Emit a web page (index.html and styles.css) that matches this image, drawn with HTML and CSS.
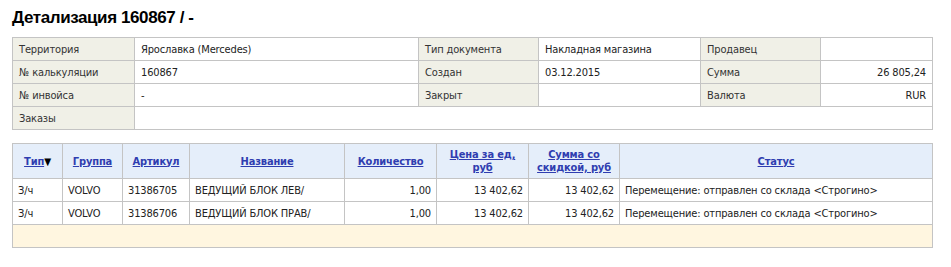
FILE: index.html
```html
<!DOCTYPE html>
<html lang="ru">
<head>
<meta charset="utf-8">
<link rel="stylesheet" href="styles.css">
</head>
<body>
<h1 class="title">Детализация 160867 / -</h1>
<table class="info">
  <colgroup>
    <col class="c1"><col class="c2"><col class="c3"><col class="c4"><col class="c5"><col class="c6">
  </colgroup>
  <tr>
    <td class="lbl">Территория</td><td>Ярославка (Mercedes)</td>
    <td class="lbl">Тип документа</td><td>Накладная магазина</td>
    <td class="lbl">Продавец</td><td></td>
  </tr>
  <tr>
    <td class="lbl">№ калькуляции</td><td>160867</td>
    <td class="lbl">Создан</td><td>03.12.2015</td>
    <td class="lbl">Сумма</td><td class="num">26 805,24</td>
  </tr>
  <tr>
    <td class="lbl">№ инвойса</td><td>-</td>
    <td class="lbl">Закрыт</td><td></td>
    <td class="lbl">Валюта</td><td class="num">RUR</td>
  </tr>
  <tr>
    <td class="lbl">Заказы</td><td colspan="5"></td>
  </tr>
</table>

<table class="grid">
  <colgroup>
    <col class="g1"><col class="g2"><col class="g3"><col class="g4"><col class="g5"><col class="g6"><col class="g7"><col class="g8">
  </colgroup>
  <thead>
    <tr>
      <th><a href="#">Тип</a><span class="arrow">▼</span></th>
      <th><a href="#">Группа</a></th>
      <th><a href="#">Артикул</a></th>
      <th><a href="#">Название</a></th>
      <th><a href="#">Количество</a></th>
      <th><a href="#">Цена за ед,<br>руб</a></th>
      <th><a href="#">Сумма со<br>скидкой, руб</a></th>
      <th><a href="#">Статус</a></th>
    </tr>
  </thead>
  <tbody>
    <tr>
      <td>З/ч</td><td>VOLVO</td><td>31386705</td><td>ВЕДУЩИЙ БЛОК ЛЕВ/</td>
      <td class="num">1,00</td><td class="num">13 402,62</td><td class="num">13 402,62</td>
      <td>Перемещение: отправлен со склада &lt;Строгино&gt;</td>
    </tr>
    <tr>
      <td>З/ч</td><td>VOLVO</td><td>31386706</td><td>ВЕДУЩИЙ БЛОК ПРАВ/</td>
      <td class="num">1,00</td><td class="num">13 402,62</td><td class="num">13 402,62</td>
      <td>Перемещение: отправлен со склада &lt;Строгино&gt;</td>
    </tr>
  </tbody>
  <tfoot>
    <tr><td colspan="8"></td></tr>
  </tfoot>
</table>
</body>
</html>
```

FILE: styles.css
```css
html, body {
  margin: 0;
  background: #ffffff;
}
body {
  padding: 9px 12px;
  font-family: "DejaVu Sans Condensed", "DejaVu Sans", Verdana, sans-serif;
  font-stretch: condensed;
  font-size: 11px;
  letter-spacing: -0.15px;
  color: #222;
}
.title {
  margin: 0 0 10px 0;
  font-family: "Liberation Sans", Arial, sans-serif;
  font-stretch: normal;
  font-size: 17px;
  letter-spacing: -0.4px;
  font-weight: bold;
  line-height: 18px;
  color: #000;
}
table {
  border-collapse: collapse;
  table-layout: fixed;
  width: 920px;
}
td, th {
  border: 1px solid #c4c4c4;
  padding: 0 6px;
  white-space: nowrap;
  overflow: hidden;
}
.info td {
  height: 22px;
  color: #222;
}
.info .lbl {
  background: #f0f0e7;
  color: #333;
}
.c1 { width: 122px; }
.c2 { width: 284px; }
.c3 { width: 120px; }
.c4 { width: 162px; }
.c5 { width: 120px; }
.c6 { width: 112px; }
.num { text-align: right; }

.grid {
  margin-top: 13px;
}
.g1 { width: 50px; }
.g2 { width: 60px; }
.g3 { width: 67px; }
.g4 { width: 155px; }
.g5 { width: 92px; }
.g6 { width: 92px; }
.g7 { width: 91px; }
.g8 { width: 313px; }
.grid th {
  height: 34px;
  background: #e5eefa;
  text-align: center;
  font-weight: bold;
  line-height: 13px;
  padding: 0 4px;
}
.grid th a {
  color: #2f3db0;
  text-decoration: underline;
}
.arrow {
  color: #000;
  font-size: 10px;
}
.grid tbody td {
  height: 22px;
  color: #222;
  padding: 0 5px;
}
.grid tfoot td {
  height: 22px;
  background: #fff6e0;
}
```
